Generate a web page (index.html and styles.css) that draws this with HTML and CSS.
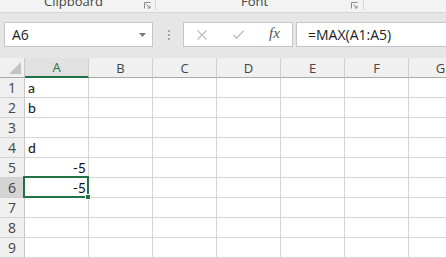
FILE: index.html
```html
<!DOCTYPE html>
<html lang="en">
<head>
  <meta charset="UTF-8">
  <title>Sheet</title>
  <link rel="stylesheet" href="styles.css">
</head>
<body>
  <div class="ribbon">
    <div class="group clip">
      <span class="label">Clipboard</span>
      <svg class="launcher" width="7" height="7" viewBox="0 0 7 7"><path d="M0.5 6.5V0.5H6.5" fill="none" stroke="#8a8a8a"/><path d="M2.5 2.5L6 6M6 3.5V6H3.5" fill="none" stroke="#8a8a8a"/></svg>
    </div>
    <div class="group font">
      <span class="label">Font</span>
      <svg class="launcher" width="7" height="7" viewBox="0 0 7 7"><path d="M0.5 6.5V0.5H6.5" fill="none" stroke="#8a8a8a"/><path d="M2.5 2.5L6 6M6 3.5V6H3.5" fill="none" stroke="#8a8a8a"/></svg>
    </div>
  </div>

  <div class="fbar">
    <div class="namebox">
      <span>A6</span>
      <svg class="caret" width="7" height="4" viewBox="0 0 7 4"><path d="M0 0H7L3.5 4Z" fill="#7a7a7a"/></svg>
    </div>
    <div class="grip"><i></i><i></i><i></i></div>
    <div class="fbtns">
      <svg class="ico" width="10" height="10" viewBox="0 0 10 10"><path d="M0.5 0.5L9.5 9.5M9.5 0.5L0.5 9.5" stroke="#bdbdbd" stroke-width="1.3"/></svg>
      <svg class="ico" width="11" height="9" viewBox="0 0 11 9"><path d="M0.5 5L3.5 8.3L10.5 0.7" fill="none" stroke="#bdbdbd" stroke-width="1.3"/></svg>
      <span class="fx">fx</span>
    </div>
    <div class="finput">=MAX(A1:A5)</div>
  </div>

  <div class="sheet">
    <div class="corner"><svg width="12" height="12" viewBox="0 0 12 12"><path d="M12 0V12H0Z" fill="#c4c4c4"/></svg></div>
    <div class="ch active">A</div>
    <div class="ch">B</div>
    <div class="ch">C</div>
    <div class="ch">D</div>
    <div class="ch">E</div>
    <div class="ch">F</div>
    <div class="ch">G</div>

    <div class="rh">1</div><div class="c">a</div><div class="c"></div><div class="c"></div><div class="c"></div><div class="c"></div><div class="c"></div><div class="c"></div>
    <div class="rh">2</div><div class="c">b</div><div class="c"></div><div class="c"></div><div class="c"></div><div class="c"></div><div class="c"></div><div class="c"></div>
    <div class="rh">3</div><div class="c"></div><div class="c"></div><div class="c"></div><div class="c"></div><div class="c"></div><div class="c"></div><div class="c"></div>
    <div class="rh">4</div><div class="c">d</div><div class="c"></div><div class="c"></div><div class="c"></div><div class="c"></div><div class="c"></div><div class="c"></div>
    <div class="rh">5</div><div class="c num">-5</div><div class="c"></div><div class="c"></div><div class="c"></div><div class="c"></div><div class="c"></div><div class="c"></div>
    <div class="rh active">6</div><div class="c num selected">-5<span class="handle"></span></div><div class="c"></div><div class="c"></div><div class="c"></div><div class="c"></div><div class="c"></div><div class="c"></div>
    <div class="rh">7</div><div class="c"></div><div class="c"></div><div class="c"></div><div class="c"></div><div class="c"></div><div class="c"></div><div class="c"></div>
    <div class="rh">8</div><div class="c"></div><div class="c"></div><div class="c"></div><div class="c"></div><div class="c"></div><div class="c"></div><div class="c"></div>
    <div class="rh">9</div><div class="c"></div><div class="c"></div><div class="c"></div><div class="c"></div><div class="c"></div><div class="c"></div><div class="c"></div>
  </div>
</body>
</html>
```

FILE: styles.css
```css
* {
  box-sizing: border-box;
}
body {
  margin: 0;
  width: 446px;
  height: 258px;
  overflow: hidden;
  background: #e6e6e6;
  font-family: "Open Sans", sans-serif;
  color: #333;
}
.ribbon {
  display: flex;
  height: 13px;
  background: #f3f3f3;
  border-bottom: 1px solid #d6d6d6;
  overflow: hidden;
}
.group {
  display: flex;
  align-items: flex-start;
  border-right: 1px solid #d6d6d6;
  height: 10px;
}
.group.clip {
  width: 156px;
  padding-left: 44px;
}
.group.font {
  width: 208px;
  padding-left: 85px;
}
.label {
  font-size: 13px;
  line-height: 16px;
  margin-top: -7px;
  color: #444;
}
.launcher {
  flex: none;
  margin-left: auto;
  margin-right: 4px;
  margin-top: 2px;
}
.font .launcher {
  margin-right: 5px;
}
.fbar {
  display: flex;
  height: 45px;
  padding: 9px 0 0 4px;
}
.namebox {
  display: flex;
  align-items: center;
  width: 149px;
  height: 25px;
  background: #fff;
  border: 1px solid #c6c6c6;
  padding: 0 6px 0 7px;
  font-size: 14px;
}
.namebox span {
  flex: 1;
  color: #222;
}
.caret {
  margin-top: 1px;
}
.grip {
  width: 30px;
  display: flex;
  flex-direction: column;
  align-items: center;
  justify-content: center;
  gap: 2px;
  height: 25px;
  padding-left: 1px;
}
.grip i {
  display: block;
  width: 2px;
  height: 2px;
  background: #a5a5a5;
}
.fbtns {
  display: flex;
  align-items: center;
  width: 110px;
  height: 25px;
  background: #fff;
  border: 1px solid #c6c6c6;
  padding-left: 13px;
}
.fbtns .ico:nth-child(2) {
  margin-left: 26px;
}
.fx {
  font-family: "Liberation Serif", serif;
  font-style: italic;
  font-size: 15px;
  color: #555;
  margin-left: 25px;
  margin-top: -2px;
}
.finput {
  flex: 1;
  height: 25px;
  margin-left: 3px;
  background: #fff;
  border: 1px solid #c6c6c6;
  border-right: none;
  padding-left: 11px;
  font-size: 14px;
  line-height: 23px;
  color: #222;
}
.sheet {
  display: grid;
  grid-template-columns: 25px repeat(7, 64px);
  grid-template-rows: repeat(10, 20px);
  background: #fff;
}
.corner, .ch, .rh {
  background: #f0f0f0;
  color: #444;
  font-size: 13px;
  display: flex;
  align-items: center;
  justify-content: center;
}
.corner {
  border-right: 1px solid #c8c8c8;
  border-bottom: 1px solid #ababab;
  align-items: flex-end;
  justify-content: flex-end;
  padding: 0 3px 3px 0;
}
.ch {
  border-right: 1px solid #d0d0d0;
  border-bottom: 1px solid #ababab;
}
.ch.active {
  background: #e1e1e1;
  color: #217346;
  border-bottom: 2px solid #217346;
}
.rh {
  border-right: 1px solid #c8c8c8;
  border-bottom: 1px solid #d0d0d0;
  font-size: 14px;
}
.rh.active {
  background: #d4d4d4;
}
.c {
  border-right: 1px solid #d4d4d4;
  border-bottom: 1px solid #d4d4d4;
  font-family: Lato, sans-serif;
  font-size: 14px;
  line-height: 18px;
  padding: 1px 3px 0;
  color: #111;
}
.c.num {
  text-align: right;
  padding-right: 2px;
}
.selected {
  position: relative;
}
.selected::after {
  content: "";
  position: absolute;
  top: -2px;
  left: -2px;
  right: -1px;
  bottom: -1px;
  border: 2px solid #217346;
}
.handle {
  position: absolute;
  right: -3px;
  bottom: -3px;
  width: 6px;
  height: 6px;
  background: #217346;
  border: 1px solid #fff;
  z-index: 1;
}
```
